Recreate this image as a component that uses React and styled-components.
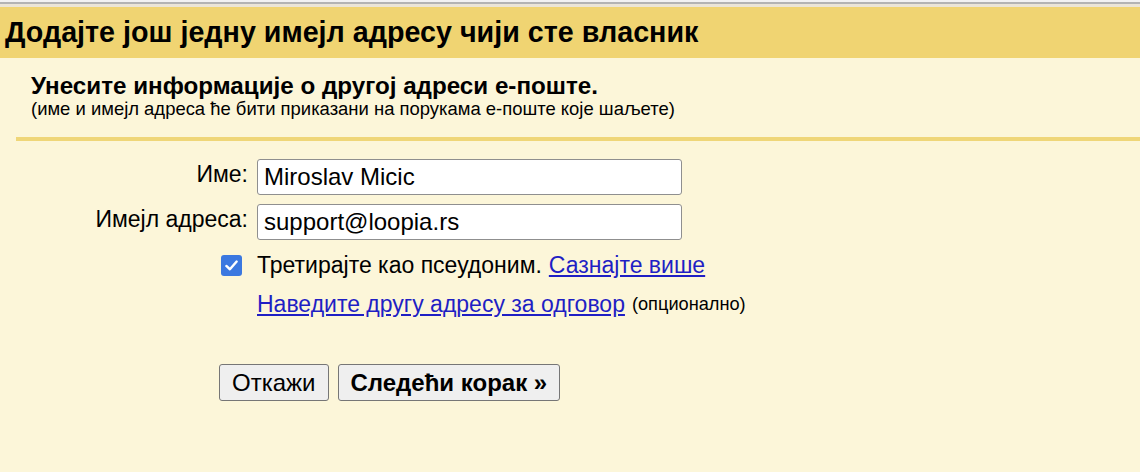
import React from "react";
import styled, { createGlobalStyle } from "styled-components";

const Global = createGlobalStyle`
  html, body {
    margin: 0;
    padding: 0;
    background: #fcf6d9;
    font-family: Arial, "Liberation Sans", sans-serif;
    color: #000;
  }
`;

const Page = styled.div`
  width: 1140px;
  height: 472px;
  overflow: hidden;
  background: #fcf6d9;
`;

const TopEdge = styled.div`
  height: 2px;
  background: #f2f2f2;
  border-bottom: 2px solid #b3b3b3;
  box-shadow: 0 3px 0 #ebe5d7;
  margin-bottom: 3px;
`;

const Header = styled.h1`
  margin: 0;
  height: 51px;
  display: flex;
  align-items: center;
  padding-left: 5px;
  background: #f0d472;
  font-size: 28.7px;
  font-weight: bold;
  white-space: nowrap;
`;

const Intro = styled.div`
  padding: 16px 0 18px 31px;
`;

const IntroTitle = styled.div`
  font-size: 24.2px;
  font-weight: bold;
  line-height: 24px;
  white-space: nowrap;
`;

const IntroNote = styled.div`
  font-size: 18.45px;
  line-height: 21px;
  white-space: nowrap;
`;

const Divider = styled.div`
  margin-left: 16px;
  height: 4px;
  background: #efd678;
`;

const Form = styled.div`
  display: grid;
  grid-template-columns: 248px 425px;
  column-gap: 9px;
  row-gap: 9px;
  margin-top: 18px;
`;

const Label = styled.label`
  text-align: right;
  font-size: 23px;
  line-height: 26px;
  padding-top: 2px;
  white-space: nowrap;
`;

const Input = styled.input`
  box-sizing: border-box;
  height: 36px;
  width: 100%;
  margin: 0;
  padding: 0 6px;
  border: 1px solid #8f8f8f;
  border-radius: 3px;
  background: #fff;
  font-family: Arial, "Liberation Sans", sans-serif;
  font-size: 24px;
  color: #000;
`;

const CheckCell = styled.div`
  display: flex;
  justify-content: flex-end;
  align-items: center;
  padding-right: 6px;
`;

const Box = styled.span`
  width: 21px;
  height: 21px;
  border-radius: 3px;
  background: #3b78e0;
  display: flex;
  align-items: center;
  justify-content: center;
`;

const Line = styled.div`
  font-size: 23px;
  display: flex;
  align-items: center;
  gap: 7px;
  white-space: nowrap;
  height: ${(p) => p.h || 33}px;
`;

const Link = styled.a`
  color: #1f1fc4;
  text-decoration: underline;
  cursor: pointer;
`;

const Small = styled.span`
  font-size: 18.2px;
`;

const Buttons = styled.div`
  display: flex;
  gap: 9px;
  padding-left: 219px;
  margin-top: 47px;
`;

const Button = styled.button`
  height: 37px;
  padding: 0 12px;
  border: 1px solid #767676;
  border-radius: 3px;
  background: #efefef;
  font-family: Arial, "Liberation Sans", sans-serif;
  font-size: 24px;
  font-weight: ${(p) => (p.primary ? "bold" : "normal")};
  color: #000;
`;

export default function App() {
  return (
    <Page>
      <Global />
      <TopEdge />
      <Header>Додајте још једну имејл адресу чији сте власник</Header>
      <Intro>
        <IntroTitle>Унесите информације о другој адреси е-поште.</IntroTitle>
        <IntroNote>
          (име и имејл адреса ће бити приказани на порукама е-поште које шаљете)
        </IntroNote>
      </Intro>
      <Divider />
      <Form>
        <Label>Име:</Label>
        <Input defaultValue="Miroslav Micic" />
        <Label>Имејл адреса:</Label>
        <Input defaultValue="support@loopia.rs" />
        <CheckCell>
          <Box>
            <svg width="15" height="15" viewBox="0 0 16 16">
              <path d="M2.5 8.5 L6.3 12 L13.5 3.8" fill="none" stroke="#fff" strokeWidth="2.6" strokeLinecap="round" strokeLinejoin="round" />
            </svg>
          </Box>
        </CheckCell>
        <Line>
          Третирајте као псеудоним. <Link>Сазнајте више</Link>
        </Line>
        <div />
        <Line h={26}>
          <Link>Наведите другу адресу за одговор</Link> <Small>(опционално)</Small>
        </Line>
      </Form>
      <Buttons>
        <Button>Откажи</Button>
        <Button primary>Следећи корак »</Button>
      </Buttons>
    </Page>
  );
}
